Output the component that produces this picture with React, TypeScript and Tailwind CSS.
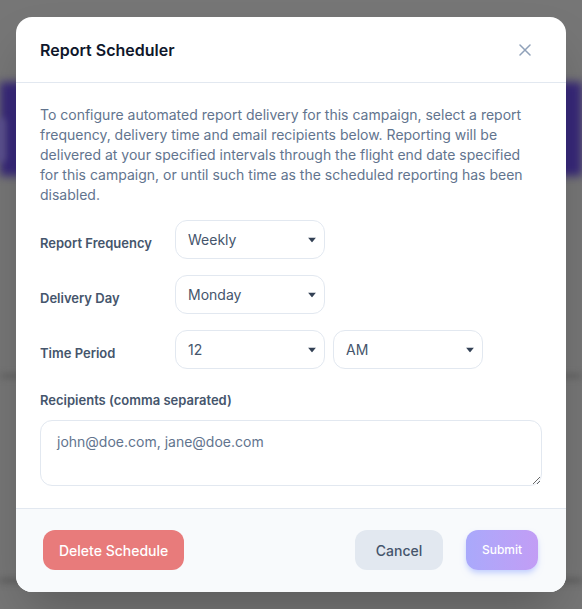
import { useState } from "react";

const FONT = { fontFamily: "Inter, 'Noto Sans', sans-serif" };

function Caret() {
  return (
    <svg
      className="pointer-events-none absolute right-[9px] top-1/2 -translate-y-1/2"
      width="8"
      height="5"
      viewBox="0 0 8 5"
    >
      <path d="M0 0h8L4 5z" fill="#334155" />
    </svg>
  );
}

function Select({ value, options }: { value: string; options: string[] }) {
  const [v, setV] = useState(value);
  return (
    <div className="relative w-[150px]">
      <select
        value={v}
        onChange={(e) => setV(e.target.value)}
        className="h-[39px] w-full appearance-none rounded-xl border border-slate-200 bg-white pl-3 pr-7 text-[14px] text-slate-600 outline-none"
      >
        {options.map((o) => (
          <option key={o}>{o}</option>
        ))}
      </select>
      <Caret />
    </div>
  );
}

function Row({ label, children }: { label: string; children: React.ReactNode }) {
  return (
    <div className="flex items-center">
      <div className="w-[135px] pt-2 text-[13px] font-semibold text-slate-600">
        {label}
      </div>
      <div className="flex gap-2">{children}</div>
    </div>
  );
}

export default function App() {
  return (
    <div
      className="relative h-[609px] w-full overflow-hidden bg-[#767676]"
      style={FONT}
    >
      {/* blurred page behind the overlay */}
      <div className="absolute left-0 right-0 top-[82px] h-[94px] bg-[#372879] blur-[4px]" />
      <div className="absolute left-[-10px] top-[118px] h-[44px] w-[16px] rounded bg-[#5a4f8e] blur-[3px]" />
      <div className="absolute left-0 right-0 top-[374px] h-[4px] bg-[#606060] blur-[3px]" />
      <div className="absolute left-0 right-0 top-[578px] h-[5px] bg-[#5e5e5e] blur-[3px]" />

      <div className="relative flex justify-center pt-[17px]">
        <div className="w-[550px] overflow-hidden rounded-2xl bg-white shadow-2xl">
          <div className="flex h-[66px] items-center justify-between border-b border-slate-200 px-6">
            <h2 className="text-[16px] font-semibold text-slate-900">
              Report Scheduler
            </h2>
            <button className="mr-[11px] mt-px text-slate-400">
              <svg width="12" height="12" viewBox="0 0 12 12">
                <path
                  d="M1 1l10 10M11 1L1 11"
                  stroke="currentColor"
                  strokeWidth="1.5"
                  strokeLinecap="round"
                />
              </svg>
            </button>
          </div>

          <div className="px-6 pb-[22px] pt-[22px]">
            <p className="text-[14px] leading-5 text-slate-500">
              To configure automated report delivery for this campaign, select a
              report frequency, delivery time and email recipients below.
              Reporting will be delivered at your specified intervals through
              the flight end date specified for this campaign, or until such
              time as the scheduled reporting has been disabled.
            </p>

            <div className="mt-[15px] flex flex-col gap-4">
              <Row label="Report Frequency">
                <Select value="Weekly" options={["Daily", "Weekly", "Monthly"]} />
              </Row>
              <Row label="Delivery Day">
                <Select
                  value="Monday"
                  options={[
                    "Monday",
                    "Tuesday",
                    "Wednesday",
                    "Thursday",
                    "Friday",
                    "Saturday",
                    "Sunday",
                  ]}
                />
              </Row>
              <Row label="Time Period">
                <Select
                  value="12"
                  options={["1", "2", "3", "4", "5", "6", "7", "8", "9", "10", "11", "12"]}
                />
                <Select value="AM" options={["AM", "PM"]} />
              </Row>
            </div>

            <label className="mt-[22px] block text-[13px] font-semibold text-slate-600">
              Recipients (comma separated)
            </label>
            <textarea
              className="mt-[9px] block h-[66px] w-full rounded-xl border border-slate-200 px-4 pt-[10px] text-[14px] text-slate-600 outline-none placeholder:text-slate-500"
              placeholder="john@doe.com, jane@doe.com"
            />
          </div>

          <div className="flex h-[84px] items-center border-t border-slate-200 bg-slate-50 pl-[27px] pr-[28px]">
            <button className="h-10 rounded-xl bg-[#e87b7b] px-4 text-[14px] font-medium text-white">
              Delete Schedule
            </button>
            <button className="ml-auto h-10 w-[88px] rounded-xl bg-slate-200 text-[14px] font-medium text-slate-600">
              Cancel
            </button>
            <button className="ml-[23px] h-10 w-[72px] rounded-xl bg-gradient-to-r from-[#a9a9fb] to-[#c29df5] text-[12px] font-medium text-white shadow-md shadow-indigo-200">
              Submit
            </button>
          </div>
        </div>
      </div>
    </div>
  );
}
